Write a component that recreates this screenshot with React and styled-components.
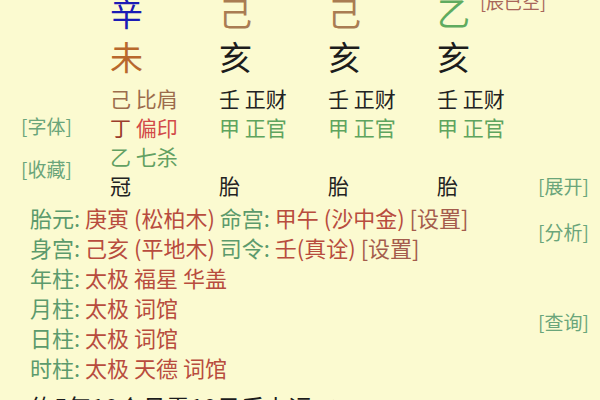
import React from "react";
import styled, { createGlobalStyle } from "styled-components";

const GlobalStyle = createGlobalStyle`
  html, body {
    margin: 0;
    padding: 0;
    background: #fbfad0;
  }
`;

const Page = styled.div`
  width: 600px;
  height: 400px;
  overflow: hidden;
  background: #fbfad0;
  display: grid;
  grid-template-columns: 538px 62px;
  font-family: "Noto Sans CJK SC", "Noto Sans", sans-serif;
`;

const Main = styled.div`
  display: flex;
  flex-direction: column;
`;

const PillarSection = styled.div`
  display: grid;
  grid-template-columns: 110px repeat(4, 109px);
  margin-top: -10px;
`;

const Sidebar = styled.div`
  display: flex;
  flex-direction: column;
  padding: 121px 0 0 21px;
  gap: 14px;
`;

const SideLink = styled.div`
  font-size: 19px;
  line-height: 29px;
  color: #6aa57a;
  white-space: nowrap;
`;

const Pillar = styled.div`
  display: flex;
  flex-direction: column;
`;

const StemRow = styled.div`
  display: flex;
  align-items: center;
  gap: 10px;
  white-space: nowrap;
`;

const Big = styled.div`
  font-size: 33px;
  line-height: 44px;
  color: ${(p) => p.$color};
`;

const Note = styled.span`
  font-size: 18px;
  line-height: 20px;
  color: #a8665a;
  align-self: flex-start;
  margin-top: 1px;
`;

const Hidden = styled.div`
  display: flex;
  flex-direction: column;
  padding-top: 6px;
  min-height: 87px;
`;

const HiddenLine = styled.div`
  font-size: 21px;
  line-height: 29px;
  white-space: nowrap;
`;

const Part = styled.span`
  color: ${(p) => p.$color};
`;

const Phase = styled.div`
  font-size: 21px;
  line-height: 29px;
  color: #222;
`;

const Info = styled.div`
  display: flex;
  flex-direction: column;
  padding: 2px 0 0 30px;
`;

const InfoLine = styled.div`
  font-size: 22px;
  line-height: 30px;
  white-space: nowrap;
`;

const Label = styled.span`
  color: #5c9a6c;
`;

const Value = styled.span`
  color: #b84c3e;
`;

const Setting = styled.span`
  color: #a45c4c;
  font-size: ${(p) => p.$size || "22px"};
`;

const Luck = styled.div`
  font-size: 24px;
  line-height: 30px;
  margin-top: 10px;
  color: #1c1c1c;
  white-space: nowrap;
  display: flex;
  align-items: baseline;
  gap: 10px;
`;

const RightCol = styled.div`
  display: flex;
  flex-direction: column;
  padding-top: 171px;
`;

const RightLink = styled.div`
  font-size: 19px;
  line-height: 29px;
  color: #6aa57a;
  margin-top: ${(p) => p.$top || 0}px;
  white-space: nowrap;
`;

const pillars = [
  {
    stem: "辛",
    stemColor: "#1b1bb5",
    branch: "未",
    branchColor: "#b8682c",
    hidden: [
      [["己", "#9c6c4c"], ["比肩", "#9c6c4c"]],
      [["丁", "#9a3c2c"], ["偏印", "#d24a48"]],
      [["乙", "#62a062"], ["七杀", "#62a062"]],
    ],
    phase: "冠",
  },
  {
    stem: "己",
    stemColor: "#a97c52",
    branch: "亥",
    branchColor: "#1c1c1c",
    hidden: [
      [["壬", "#222"], ["正财", "#222"]],
      [["甲", "#5ea45e"], ["正官", "#5ea45e"]],
    ],
    phase: "胎",
  },
  {
    stem: "己",
    stemColor: "#a97c52",
    branch: "亥",
    branchColor: "#1c1c1c",
    hidden: [
      [["壬", "#222"], ["正财", "#222"]],
      [["甲", "#5ea45e"], ["正官", "#5ea45e"]],
    ],
    phase: "胎",
  },
  {
    stem: "乙",
    stemColor: "#5fab5f",
    note: "[辰巳空]",
    branch: "亥",
    branchColor: "#1c1c1c",
    hidden: [
      [["壬", "#222"], ["正财", "#222"]],
      [["甲", "#5ea45e"], ["正官", "#5ea45e"]],
    ],
    phase: "胎",
  },
];

const shensha = [
  ["年柱", "太极 福星 华盖"],
  ["月柱", "太极 词馆"],
  ["日柱", "太极 词馆"],
  ["时柱", "太极 天德 词馆"],
];

export default function App() {
  return (
    <Page>
      <GlobalStyle />
      <Main>
        <PillarSection>
          <Sidebar>
            <SideLink>[字体]</SideLink>
            <SideLink>[收藏]</SideLink>
          </Sidebar>
          {pillars.map((p, i) => (
            <Pillar key={i}>
              <StemRow>
                <Big $color={p.stemColor}>{p.stem}</Big>
                {p.note && <Note>{p.note}</Note>}
              </StemRow>
              <Big $color={p.branchColor}>{p.branch}</Big>
              <Hidden>
                {p.hidden.map((h, j) => (
                  <HiddenLine key={j}>
                    <Part $color={h[0][1]}>{h[0][0]}</Part>{" "}
                    <Part $color={h[1][1]}>{h[1][0]}</Part>
                  </HiddenLine>
                ))}
              </Hidden>
              <Phase>{p.phase}</Phase>
            </Pillar>
          ))}
        </PillarSection>
        <Info>
          <InfoLine>
            <Label>胎元: </Label>
            <Value>庚寅 (松柏木) </Value>
            <Label>命宫: </Label>
            <Value>甲午 (沙中金) </Value>
            <Setting>[设置]</Setting>
          </InfoLine>
          <InfoLine>
            <Label>身宫: </Label>
            <Value>己亥 (平地木) </Value>
            <Label>司令: </Label>
            <Value>壬(真诠) </Value>
            <Setting>[设置]</Setting>
          </InfoLine>
          {shensha.map(([k, v]) => (
            <InfoLine key={k}>
              <Label>{k}: </Label>
              <Value>{v}</Value>
            </InfoLine>
          ))}
          <Luck>
            约5年10个月零10日后上运
            <Setting $size="21px">[设置]</Setting>
          </Luck>
        </Info>
      </Main>
      <RightCol>
        <RightLink>[展开]</RightLink>
        <RightLink $top={17}>[分析]</RightLink>
        <RightLink $top={61}>[查询]</RightLink>
      </RightCol>
    </Page>
  );
}
